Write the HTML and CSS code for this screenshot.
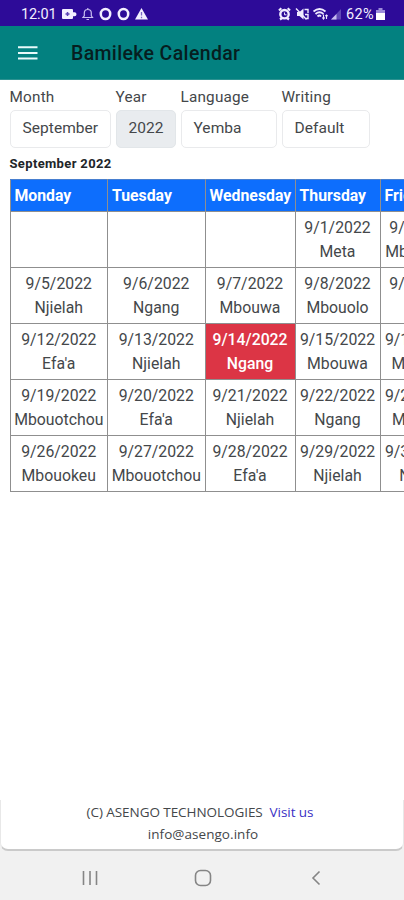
FILE: index.html
```
<!DOCTYPE html>
<html lang="en">
<head>
<meta charset="utf-8">
<title>Bamileke Calendar</title>
<link rel="stylesheet" href="styles.css">
</head>
<body>
<div class="status">
  <span class="clock">12:01</span>
  <svg class="status-left" width="88" height="16" viewBox="0 0 88 16" fill="none" stroke="#f3efff">
    <path d="M1 3h9q1 0 1 1v2.200h1.500q2 0 2 2t-2 2H11V12q0 1-1 1H1q-1 0-1-1V4q0-1 1-1z" fill="#f3efff" stroke="none"/>
    <path d="M3.500 8h4M5.500 6v4" stroke="#5a41b4" stroke-width="1.500"/>
    <path d="M21 11.500h9.500l-1.200-1.700V7q0-3.500-3.500-3.500T22.300 7v2.800zM24.500 13.500h2.500M25.800 2v1.500" stroke="#c9bdf0" stroke-width="1.200"/>
    <ellipse cx="43.500" cy="8" rx="4.700" ry="5" stroke-width="2.500"/>
    <ellipse cx="61.500" cy="8" rx="4.700" ry="5" stroke-width="2.500"/>
    <path d="M79.500 2l6.500 11.500H73z" fill="#f3efff" stroke="none"/>
    <path d="M79.500 6v3.500M79.500 10.800v1.400" stroke="#7a68c4" stroke-width="1.300"/>
  </svg>
  <span class="spacer"></span>
  <svg class="status-right" width="64" height="16" viewBox="0 0 64 16" fill="none" stroke="#efeaff">
    <circle cx="7.500" cy="8.200" r="4.200" stroke-width="2.400"/>
    <path d="M2 4.500l2.300-2.200M13 4.500l-2.300-2.200M3 13.500L5 12M12 13.500L10 12" stroke-width="2.200"/>
    <path d="M7.500 6.500v2.300h2" stroke-width="1"/>
    <path d="M20 6h2.500l4-3.500v11L22.500 10H20z" fill="#efeaff" stroke="none"/>
    <path d="M19 2.500l10.500 11M27.500 3.500H31V7M28 8.500h3v4h-2" stroke-width="1.400"/>
    <path d="M36.500 5.500q6-5 12 0M38.500 8q4-3.500 8 0M40.500 10.500q2-2 3.500 0" stroke-width="1.800"/>
    <path d="M46.500 8.500v4.500M45.300 11.500l1.200 1.500 1.200-1.500M49.500 13V9M48.300 10.200L49.500 9l1.200 1.200" stroke-width="1.100"/>
    <path d="M54 13.500L64 3v10.500z" fill="#5f47b6" stroke="none"/>
    <path d="M54 13.500l5.500-5.500v5.500z" fill="#c9bdf0" stroke="none"/>
  </svg>
  <span class="percent">62%</span>
  <svg class="battery" width="9" height="12" viewBox="0 0 9 12">
    <path d="M2.500 0h4v2H9v10H0V2h2.500z" fill="#9d8cda"/>
    <path d="M0 5h9v7H0z" fill="#fff"/>
  </svg>
</div>
<header class="appbar">
  <svg class="menu" width="20" height="14" viewBox="0 0 20 14"><path d="M0 1.200h19.500M0 6.900h19.500M0 12.500h19.500" stroke="#e8fafa" stroke-width="2"/></svg>
  <h1>Bamileke Calendar</h1>
</header>
<main>
  <div class="filters">
    <div class="field month"><label>Month</label><div class="select">September</div></div>
    <div class="field year"><label>Year</label><div class="select disabled">2022</div></div>
    <div class="field language"><label>Language</label><div class="select">Yemba</div></div>
    <div class="field writing"><label>Writing</label><div class="select">Default</div></div>
  </div>
  <h2>September 2022</h2>
  <div class="scroller">
    <table>
      <colgroup><col class="c1"><col class="c2"><col class="c3"><col class="c4"><col class="c5"></colgroup>
      <thead><tr><th>Monday</th><th>Tuesday</th><th>Wednesday</th><th>Thursday</th><th>Friday</th></tr></thead>
      <tbody>
        <tr><td></td><td></td><td></td><td>9/1/2022<br>Meta</td><td>9/2/2022<br>Mbouokeu</td></tr>
        <tr><td>9/5/2022<br>Njielah</td><td>9/6/2022<br>Ngang</td><td>9/7/2022<br>Mbouwa</td><td>9/8/2022<br>Mbouolo</td><td>9/9/2022<br>Meta</td></tr>
        <tr><td>9/12/2022<br>Efa'a</td><td>9/13/2022<br>Njielah</td><td class="today">9/14/2022<br>Ngang</td><td>9/15/2022<br>Mbouwa</td><td>9/16/2022<br>Mbouolo</td></tr>
        <tr><td>9/19/2022<br>Mbouotchou</td><td>9/20/2022<br>Efa'a</td><td>9/21/2022<br>Njielah</td><td>9/22/2022<br>Ngang</td><td>9/23/2022<br>Mbouwa</td></tr>
        <tr><td>9/26/2022<br>Mbouokeu</td><td>9/27/2022<br>Mbouotchou</td><td>9/28/2022<br>Efa'a</td><td>9/29/2022<br>Njielah</td><td>9/30/2022<br>Ngang</td></tr>
      </tbody>
    </table>
  </div>
</main>
<footer>
  <div class="card">
    <p>(C) ASENGO TECHNOLOGIES&nbsp; <a>Visit us</a></p>
    <p class="mail">info@asengo.info</p>
  </div>
</footer>
<nav>
  <svg width="16" height="16" viewBox="0 0 16 16"><path d="M1.500 1v14M8 1v14M14.500 1v14" stroke="#858585" stroke-width="1.600"/></svg>
  <svg width="18" height="18" viewBox="0 0 18 18"><rect x="1.500" y="1.500" width="15" height="15" rx="5" fill="none" stroke="#858585" stroke-width="1.600"/></svg>
  <svg width="10" height="16" viewBox="0 0 10 16"><path d="M8.500 1.500L2 8l6.500 6.500" fill="none" stroke="#858585" stroke-width="1.600"/></svg>
</nav>
</body>
</html>
```
FILE: styles.css
```
* { box-sizing: border-box; }
body {
  margin: 0;
  width: 404px;
  height: 900px;
  display: flex;
  flex-direction: column;
  overflow: hidden;
  background: #fff;
  color: #44474a;
  font-family: Roboto, sans-serif;
}
.status {
  height: 26px;
  flex: none;
  background: #2d0b98;
  color: #f3efff;
  display: flex;
  align-items: center;
  padding: 2px 19px 0 21px;
  font-size: 14.500px;
}
.clock { width: 41px; letter-spacing: -0.100px; }
.spacer { flex: 1; }
.percent { margin-left: 5px; width: 29px; font-size: 14.500px; letter-spacing: 0.300px; }
.battery { margin-left: 1px; }
.appbar {
  height: 54px;
  flex: none;
  background: #038180;
  border-bottom: 1px solid #2c9291;
  display: flex;
  align-items: center;
  padding-left: 18px;
}
.appbar h1 {
  margin: 2px 0 0 33px;
  font-size: 19.500px;
  font-weight: 500;
  letter-spacing: 0.350px;
  color: #061e20;
}
main { flex: 1; padding: 5px 0 0 9.500px; overflow: hidden; }
.filters { display: flex; gap: 5px; }
.field label {
  display: block;
  height: 25px;
  line-height: 25px;
  font-size: 15.300px;
  letter-spacing: 0.200px;
}
.month { width: 101px; }
.year { width: 60px; }
.language { width: 96px; }
.writing { width: 88px; }
.select {
  height: 38px;
  border: 1px solid #e9eaec;
  border-radius: 5px;
  padding-left: 12px;
  line-height: 35px;
  font-size: 15.500px;
  letter-spacing: 0.050px;
}
.select.disabled { background: #e9ecef; border-color: #e2e6e9; }
h2 {
  margin: 5px 0;
  font-size: 13px;
  line-height: 21px;
  font-weight: 700;
  letter-spacing: 0.350px;
  color: #212529;
}
table {
  width: 454px;
  table-layout: fixed;
  border-collapse: collapse;
}
.c1, .c2 { width: 97.500px; }
.c3 { width: 90px; }
.c4, .c5 { width: 85px; }
th, td { border: 1px solid #8f8f8f; padding: 0; white-space: nowrap; }
th {
  height: 32px;
  padding-left: 4px;
  background: #0d6efd;
  color: #fff;
  text-align: left;
  font-size: 15.800px;
  font-weight: 700;
  border-top-color: #477fd0;
}
td {
  height: 56px;
  text-align: center;
  font-size: 15.800px;
  line-height: 24px;
}
td.today { background: #dc3545; color: #fff; font-weight: 500; }
footer { height: 51px; flex: none; background: #f1f1f1; }
.card {
  height: 51px;
  padding-top: 2px;
  background: #fff;
  border: 1px solid #e8e8e8;
  border-top: 0;
  border-bottom: 2px solid #cacaca;
  border-radius: 0 0 8px 8px;
  text-align: center;
  font-family: "Open Sans", sans-serif;
  font-size: 13.500px;
}
.card p { margin: 0 0 0 -4px; line-height: 21.500px; letter-spacing: -0.060px; }
.card .mail { margin-left: 2px; letter-spacing: 0.050px; }
.card a { color: #3a2fc4; }
nav {
  height: 49px;
  flex: none;
  background: #f1f1f1;
  display: grid;
  grid-template-columns: 112px 117px 1fr;
  align-items: center;
  padding: 4px 0 0 82px;
}
```
